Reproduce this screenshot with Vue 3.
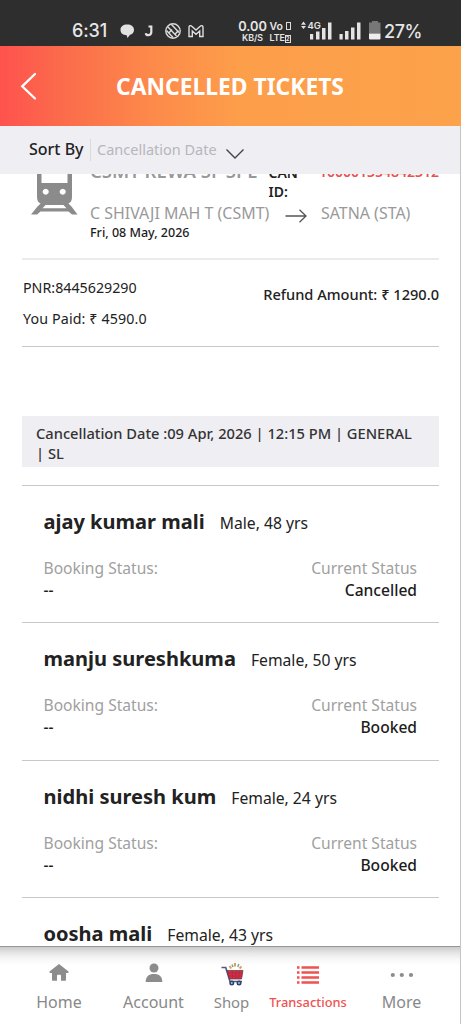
<script setup>
const passengers = [
  { name: 'ajay kumar mali', info: 'Male, 48 yrs', status: 'Cancelled' },
  { name: 'manju sureshkuma', info: 'Female, 50 yrs', status: 'Booked' },
  { name: 'nidhi suresh kum', info: 'Female, 24 yrs', status: 'Booked' },
  { name: 'oosha mali', info: 'Female, 43 yrs', status: 'Booked' },
]
</script>

<template>
  <div class="screen">
    <div class="status">
      <span class="time">6:31</span>
      <svg class="notif" width="86" height="18" viewBox="0 0 86 18">
        <path d="M7.200 2.500c4 0 6.800 2 6.800 5.400 0 2.600-1.800 4.200-4 4.800L7.500 16 6.700 13.200C2.700 12.900.500 11 .500 7.900.500 4.500 3.200 2.500 7.200 2.500z" fill="#e2e2e2" />
        <path d="M28.500 4.500h2.800v5.500c0 2-1 3.200-3 3.200-1.500 0-2.300-.7-2.600-2" fill="none" stroke="#e2e2e2" stroke-width="2.200" />
        <g fill="none" stroke="#dcdcdc" stroke-width="1.400">
          <circle cx="53" cy="9" r="7.200" />
          <path d="M48 5l8.500 9M51.500 2.500L59 10.500M46.500 8.500L53 15.500M49 10.800L52 7.500M55 12.200L58.500 8.500" />
        </g>
        <path d="M69 14.500V5.200c0-1.600 1.800-2 2.800-1l4.200 3.900 4.200-3.900c1-1 2.800-.6 2.800 1v9.300h-3.300V9L76 12.300 72.300 9v5.500z" fill="none" stroke="#dedede" stroke-width="1.400" />
      </svg>
      <span class="speed"><b>0.00</b><i>KB/S</i></span>
      <span class="volte"><b>Vo <em></em></b><i>LTE<em>2</em></i></span>
      <svg class="signals" width="84" height="24" viewBox="0 0 84 24">
        <path d="M3.500 3.500L6 6.800H1zM3.500 11L6 8H1z" fill="#e2e2e2" />
        <text x="7.500" y="10.500" class="fourg">4G</text>
        <g fill="#e4e4e4">
          <rect x="10" y="16" width="3.200" height="5.500" /><rect x="16" y="13.500" width="3.500" height="8" /><rect x="22" y="10" width="3.500" height="11.500" /><rect x="28" y="4.500" width="3.500" height="17" />
          <rect x="39.500" y="16" width="3.200" height="5.500" /><rect x="45" y="13" width="3.500" height="8.500" /><rect x="51" y="9.500" width="3.500" height="12" /><rect x="57" y="4.500" width="3.500" height="17" />
        </g>
        <path d="M72 3h6v1.500h2.500v11h-11.500v-11H72z" fill="#777" />
        <path d="M69 15.500h11.500v5q0 1-1 1H70q-1 0-1-1z" fill="#eee" />
      </svg>
      <span class="percent">27%</span>
    </div>

    <header class="header">
      <svg class="back" width="18" height="30" viewBox="0 0 18 30"><path d="M15 3L2.200 15.300 15 27.500" fill="none" stroke="#fff" stroke-width="2.300" stroke-linecap="round" /></svg>
      <h1>CANCELLED TICKETS</h1>
    </header>

    <div class="body">
      <div class="sort">
        <span class="sortby">Sort By</span>
        <span class="bar"></span>
        <span class="sortval">Cancellation Date</span>
        <svg class="chev" width="20" height="12" viewBox="0 0 20 12"><path d="M1.500 1.500L10 10l8.500-8.500" fill="none" stroke="#444" stroke-width="1.400" /></svg>
      </div>

      <div class="content">
        <section class="trip">
          <svg class="train" width="48" height="54" viewBox="0 0 48 54">
            <path fill-rule="evenodd" fill="#8b8b8b" d="M12 0h25q5 0 5 5v28q0 7-6 7H13q-6 0-6-7V5q0-5 5-5zM11.500 5v14h26V5zM15.700 24.800a3 3 0 1 0 .01 0zM32.700 24.800a3 3 0 1 0 .01 0z" />
            <path fill-rule="evenodd" fill="#8b8b8b" d="M12 38h25l4.500 4.500 6 8H42l-3.500-3h-28L7 50.500H1l6.500-8zM15.500 41l-3 3.200h24L33.500 41z" />
          </svg>
          <div class="details">
            <div class="toprow">
              <span class="trainname">CSMT REWA SF SPE</span>
              <span class="canid">CAN ID:</span>
              <span class="cannum">100001354842312</span>
            </div>
            <div class="route">
              <span class="from">C SHIVAJI MAH T (CSMT)</span>
              <svg class="arrow" width="22" height="14" viewBox="0 0 22 14"><path d="M.5 7h20.500M14.500.800L21 7l-6.500 6.200" fill="none" stroke="#555" stroke-width="1.300" /></svg>
              <span class="to">SATNA (STA)</span>
            </div>
            <div class="date">Fri, 08 May, 2026</div>
          </div>
        </section>

        <section class="fare">
          <div class="left">
            <div class="pnr">PNR:8445629290</div>
            <div class="paid">You Paid: ₹ 4590.0</div>
          </div>
          <div class="refund">Refund Amount: ₹ 1290.0</div>
        </section>

        <div class="cancel"><span>Cancellation Date :09 Apr, 2026 | 12:15 PM | GENERAL</span><br />| SL</div>

        <section v-for="p in passengers" :key="p.name" class="passenger">
          <div class="who"><span class="name">{{ p.name }}</span><span class="info">{{ p.info }}</span></div>
          <div class="pair labels"><span class="bk">Booking Status:</span><span class="cs">Current Status</span></div>
          <div class="pair values"><span>--</span><span>{{ p.status }}</span></div>
        </section>
      </div>

      <nav class="nav">
        <div class="item home">
          <svg width="22" height="22" viewBox="0 0 22 22"><path d="M11 2L1.500 9.500q-.5 1.500 1 1.500H4v7q0 .8.800.8H9v-5q0-1 1-1h2q1 0 1 1v5h4.200q.8 0 .8-.8v-7h1.500q1.500 0 1-1.500z" fill="#8c8c8c" /></svg>
          <span>Home</span>
        </div>
        <div class="item account">
          <svg width="22" height="22" viewBox="0 0 22 22"><circle cx="11" cy="6" r="4.500" fill="#8c8c8c" /><path d="M2.700 20c0-5.500 3-8 8.300-8s8.300 2.500 8.300 8z" fill="#8c8c8c" /></svg>
          <span>Account</span>
        </div>
        <div class="item shop">
          <svg width="26" height="26" viewBox="0 0 26 26">
            <path d="M2.500 5.500h4.200L11 19.500h12" fill="none" stroke="#4b5b78" stroke-width="1.600" />
            <path d="M8 8.500h16l-1.500 8.500H10.500z" fill="#d92c40" stroke="#5b3350" stroke-width=".7" />
            <path d="M9 11h15M10 14h13.500M13 8.500l1 8.500M17 8.500v8.500M20.500 8.500l-1 8.500" stroke="#9e2b43" stroke-width=".6" />
            <path d="M10.500 4l1.800 2.500M16 1v3.500M22.500 4.500l-2 2" stroke="#d5a35a" stroke-width="2" /><path d="M13 2.500l1 2.500M19.800 2l-1 3" stroke="#79a38a" stroke-width="1.500" />
            <circle cx="12.800" cy="21" r="2.500" fill="#29466f" /><circle cx="20" cy="21" r="2.500" fill="#29466f" /><circle cx="12.800" cy="21" r=".9" fill="#b8c7d8" /><circle cx="20" cy="21" r=".9" fill="#b8c7d8" />
          </svg>
          <span>Shop</span>
        </div>
        <div class="item transactions">
          <svg width="22" height="20" viewBox="0 0 22 20"><path d="M0 2.500h2.500M0 7.500h2.500M0 12.500h2.500M0 17.500h2.500M4.500 2.500H22M4.500 7.500H22M4.500 12.500H22M4.500 17.500H22" stroke="#f0524f" stroke-width="2.600" /></svg>
          <span>Transactions</span>
        </div>
        <div class="item more">
          <svg width="24" height="6" viewBox="0 0 24 6"><circle cx="2.800" cy="3" r="2.100" fill="#8c8c8c" /><circle cx="11.800" cy="3" r="2.100" fill="#8c8c8c" /><circle cx="21" cy="3" r="2.100" fill="#8c8c8c" /></svg>
          <span>More</span>
        </div>
      </nav>
    </div>
  </div>
</template>

<style>
body { margin: 0; background: #fff; }
</style>

<style scoped>
.screen { width: 461px; height: 1024px; overflow: hidden; display: flex; flex-direction: column; background: #fff; font-family: "Noto Sans", "Open Sans", sans-serif; color: #222; white-space: nowrap; }
.status { height: 46px; flex: none; box-sizing: border-box; padding: 16px 0 0 72px; background: #2e2e2e; color: #e6e6e6; display: flex; align-items: flex-start; font-family: Inter, sans-serif; }
.time { width: 48px; font-size: 18px; line-height: 30px; font-weight: 500; letter-spacing: -.1px; }
.notif { margin-top: 6px; flex: none; }
.speed, .volte { display: flex; flex-direction: column; margin-top: 5px; }
.speed { width: 34px; margin-left: 29.500px; align-items: center; }
.speed b { font-size: 12.800px; line-height: 12px; font-weight: 600; }
.speed i, .volte i { font-size: 8.800px; line-height: 9px; font-style: normal; font-weight: 600; }
.volte { width: 28.500px; }
.volte b { font-size: 10.500px; line-height: 12px; font-weight: 600; }
.volte b em { display: inline-block; width: 3px; height: 6px; border: 1px solid #ddd; }
.volte i em { font-style: normal; font-size: 6px; border: 1px solid #ddd; line-height: 6px; display: inline-block; }
.signals { flex: none; margin-left: 2px; margin-top: 2px; }
.fourg { font: 600 9.500px Inter, sans-serif; fill: #e4e4e4; }
.percent { font-size: 18px; line-height: 31px; font-weight: 500; margin-left: 0; letter-spacing: -.4px; }
.header { height: 80px; flex: none; display: flex; align-items: center; background: linear-gradient(90deg, #ff524e 0%, #fb6c4b 14%, #fd8b4a 34%, #fd9e4a 52%, #fca24b 100%); }
.back { margin-left: 20px; }
h1 { margin: 1px 0 0 78px; font-size: 22.850px; line-height: 30px; font-weight: 700; color: #fff; }
.body { flex: 1; min-height: 0; display: flex; flex-direction: column; border-right: 1px solid #c4c4c6; }
.sort { height: 48px; flex: none; background: #efeef3; display: flex; align-items: center; padding-left: 29px; }
.sortby { width: 61px; margin-top: -2px; font-size: 16px; font-weight: 500; }
.bar { width: 1px; height: 22px; background: #dad9de; margin-right: 6px; }
.sortval { width: 128px; margin-top: -2px; font-size: 14.500px; color: #b7b6bb; }
.chev { margin-top: 7px; }
.content { flex: 1; min-height: 0; overflow: hidden; padding: 0 21px 0 22px; }
.trip { height: 84px; border-bottom: 2px solid #ebebeb; display: flex; }
.train { flex: none; margin: -10px 12px 0 8px; }
.details { flex: 1; }
.toprow { display: flex; margin-top: -11px; height: 40px; line-height: 19px; align-items: flex-start; }
.trainname { width: 178.500px; margin-top: -2px; font-size: 18.500px; font-weight: 600; color: #999; }
.canid { width: 50.500px; font-size: 14px; font-weight: 600; white-space: normal; }
.cannum { margin-top: -1px; font-size: 14px; font-weight: 600; color: #e9504f; }
.route { height: 20px; line-height: 20px; display: flex; align-items: center; color: #999; font-size: 15.950px; }
.from { width: 195px; }
.arrow { margin: 5px 14px 0 0; }
.date { font-size: 12.500px; font-weight: 500; line-height: 20px; color: #1c1c1c; }
.fare { height: 86px; border-bottom: 1px solid #c8c8c8; display: flex; justify-content: space-between; }
.left { padding: 17px 0 0 1px; font-size: 14.250px; line-height: 22px; }
.paid { margin-top: 9px; letter-spacing: .13px; }
.refund { font-size: 14.600px; line-height: 22px; margin-top: 23px; font-weight: 500; }
.cancel { height: 51px; box-sizing: border-box; margin: 69px 0 18px; padding: 7px 14px 0; background: #efeef3; font-size: 14.660px; font-weight: 500; line-height: 20px; color: #333; }
.passenger { height: 136.400px; border-top: 1px solid #c8c8c8; padding: 0 22px 0 21.500px; }
.who { display: flex; align-items: baseline; gap: 15px; line-height: 30px; padding-top: 21px; height: 50px; }
.name { font-size: 20.050px; font-weight: 700; }
.info { font-size: 15.700px; }
.pair { display: flex; justify-content: space-between; line-height: 22px; font-size: 15.600px; }
.labels { color: #a0a0a0; }
.values { font-weight: 500; color: #1c1c1c; }
.nav { height: 77px; flex: none; display: flex; border-top: 1px solid #969696; background: linear-gradient(#cbcbcb 0, #e6e6e6 6px, #f7f7f7 12px, #fff 19px); color: #888; font-size: 16px; }
.item { flex: none; display: flex; flex-direction: column; align-items: center; justify-content: space-between; box-sizing: border-box; padding: 15px 0 11px; line-height: 22px; height: 77px; }
.home { width: 118px; }
.account { width: 71px; }
.shop { width: 85px; font-size: 14.900px; }
.transactions { width: 68px; color: #f0524f; font-size: 12.850px; font-weight: 500; padding-top: 18px; }
.more { width: 119px; padding-top: 25px; }
</style>
